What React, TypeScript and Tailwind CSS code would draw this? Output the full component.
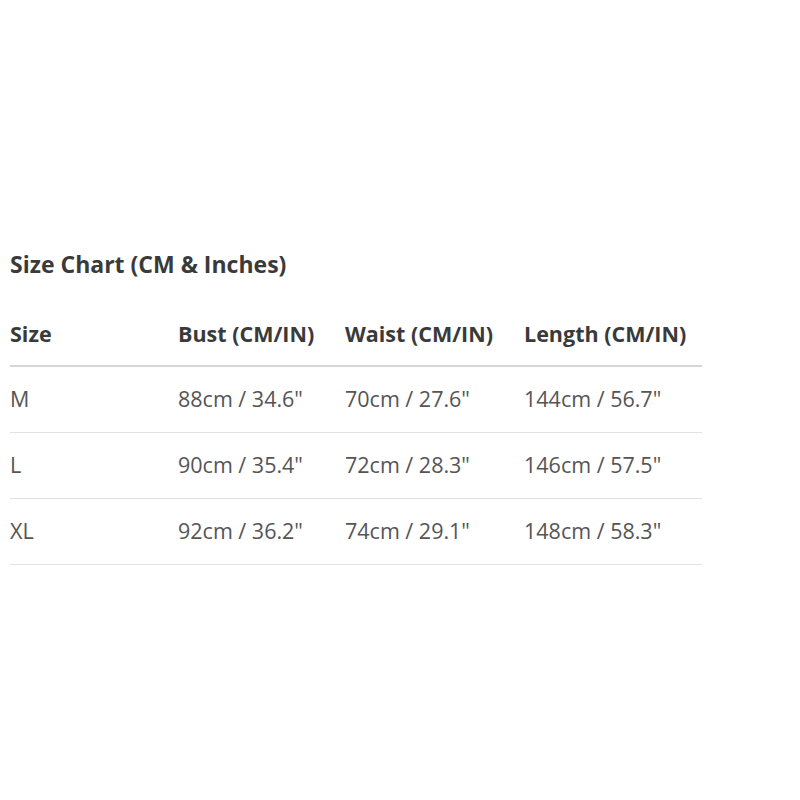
const rows = [
  ["M", "88cm / 34.6\"", "70cm / 27.6\"", "144cm / 56.7\""],
  ["L", "90cm / 35.4\"", "72cm / 28.3\"", "146cm / 57.5\""],
  ["XL", "92cm / 36.2\"", "74cm / 29.1\"", "148cm / 58.3\""],
];

const cols = "grid grid-cols-[168px_167px_179px_178px]";

export default function App() {
  return (
    <div
      className="w-[800px] h-[800px] bg-white pt-[246px] pl-[10px]"
      style={{ fontFamily: '"Open Sans", "Noto Sans", sans-serif' }}
    >
      <h2 className="text-[23px] leading-[36px] font-bold text-[#3a3a3a]">
        Size Chart (CM &amp; Inches)
      </h2>
      <div className="w-[692px] mt-[32px]">
        <div className={`${cols} h-[53px] pt-[4px] items-start border-b-2 border-[#d6d6d6] text-[21.5px] font-bold text-[#3a3a3a]`}>
          <div>Size</div>
          <div>Bust (CM/IN)</div>
          <div>Waist (CM/IN)</div>
          <div>Length (CM/IN)</div>
        </div>
        {rows.map((r) => (
          <div
            key={r[0]}
            className={`${cols} h-[66px] items-center border-b border-[#e2e2e2] text-[21.5px] text-[#555]`}
          >
            {r.map((c, i) => (
              <div key={i}>{c}</div>
            ))}
          </div>
        ))}
      </div>
    </div>
  );
}
